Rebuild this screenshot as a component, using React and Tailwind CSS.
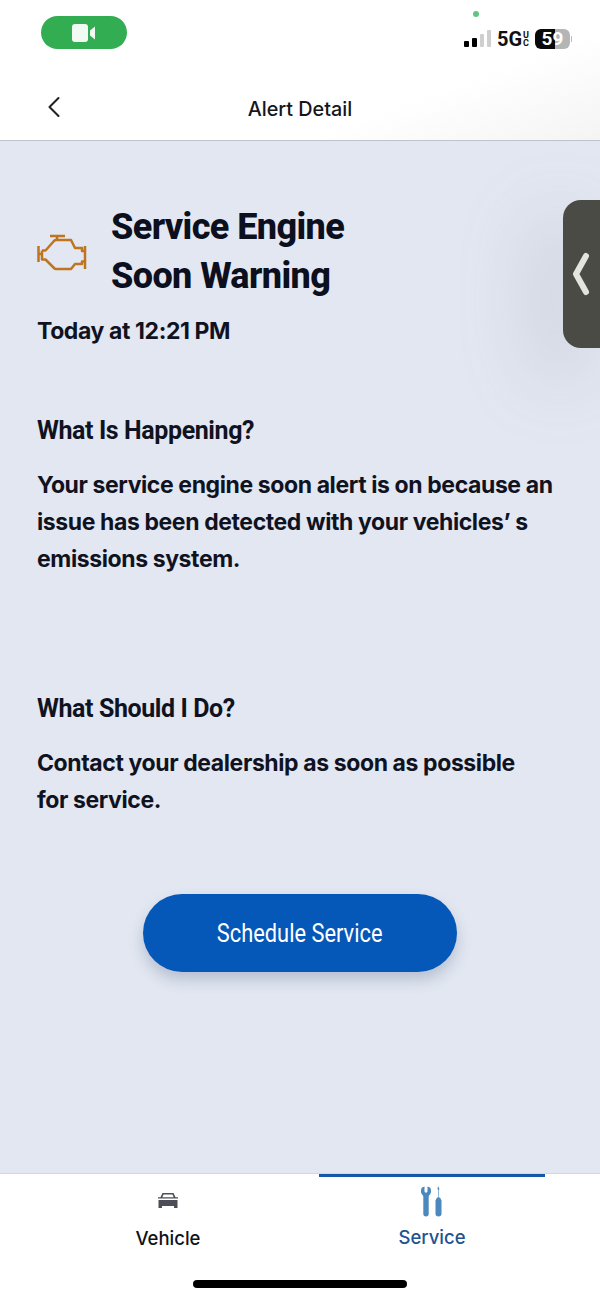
import { ChevronLeft } from "lucide-react";

function EngineIcon() {
  return (
    <svg width="50" height="37" viewBox="0 0 50 37" fill="none" stroke="#bf7420" strokeWidth="2.5" strokeLinejoin="round">
      <path d="M13 2h15M20 2v4" />
      <path d="M1.500 12v16M1.500 20h3.500M5 16.500v9h3.500L17 34q1 1 2 1h15l4-5h7v-2.500h3" />
      <path d="M5 16.500h3.500L17 7q1-1 2-1h15l4 8h7v3h3M48 12v23" />
    </svg>
  );
}

function CarIcon() {
  return (
    <svg width="22" height="18" viewBox="0 0 22 18" fill="#4b4f55">
      <path d="M5.500 1h11l2 4.200h2.500v1.300h-20V5.200H3.500zM6.600 2.500l-1.300 2.700h11.400l-1.300-2.700z" fillRule="evenodd" />
      <path d="M1.500 8h19v8h-3.500v-2h-12v2H1.500z" />
    </svg>
  );
}

function ToolsIcon() {
  return (
    <svg width="22" height="31" viewBox="0 0 22 31" fill="#4a88bd">
      <path d="M1 1.500l2.500-1v5l1.500 1.500 1.500-1.500v-5l2.500 1c1.500 2 1.500 5.500-.5 7.500-.5.500-.8.800-.8 1.500v17.500c0 1.500-1 2.500-2.700 2.500s-2.700-1-2.700-2.500V10.500c0-.7-.3-1-.8-1.500C-.5 7 -.5 3.500 1 1.500z" />
      <path d="M17 0l1.500 3-.7 1v7.500h1.200l1.500 3v13.500c0 1.500-1.200 2.500-3 2.500s-3-1-3-2.500V14.500l1.500-3h1.200V4l-.7-1z" />
    </svg>
  );
}

function StatusBar() {
  return (
    <div className="relative flex h-[65px] items-center justify-between pl-[41px] pr-[28px]">
      <div className="flex h-[33px] w-[86px] items-center justify-center rounded-full bg-[#32ad52]">
        <svg width="25" height="18" viewBox="0 0 25 18" fill="#f2fbf3">
          <rect x="0" y="0" width="16" height="18" rx="3" />
          <path d="M18 6.500l5-4v13l-5-4z" />
        </svg>
      </div>
      <span className="absolute left-[473px] top-[11px] h-[6px] w-[6px] rounded-full bg-[#62c383]" />
      <div className="flex items-center pt-[12px]">
        <div className="flex items-end gap-[3px]">
          <span className="h-[6px] w-[5px] rounded-[1px] bg-black" />
          <span className="h-[9px] w-[5px] rounded-[1px] bg-black" />
          <span className="h-[13px] w-[4px] rounded-[1px] bg-[#cfcfcf]" />
          <span className="h-[17px] w-[4px] rounded-[1px] bg-[#cfcfcf]" />
        </div>
        <span className="ml-[6px] font-['Roboto',sans-serif] text-[20px] font-bold leading-none text-[#111]">5G</span>
        <span className="ml-[1px] flex flex-col font-['Roboto',sans-serif] text-[9px] font-bold leading-[8px] text-[#111]">
          <span>U</span>
          <span>C</span>
        </span>
        <div className="ml-[6px] flex h-[20px] w-[35px] items-center justify-center rounded-[6px] bg-[linear-gradient(90deg,#0a0a0a_57%,#b5b5b5_57%)] font-['Roboto',sans-serif] text-[19px] font-bold leading-none text-white">
          59
        </div>
        <span className="ml-[1px] h-[6px] w-[1px] bg-[#bbb]" />
      </div>
    </div>
  );
}

function Header() {
  return (
    <header className="h-[141px] shrink-0 border-b border-[#bfc3cb] bg-[linear-gradient(160deg,#ffffff_70%,#f4f4f5_100%)]">
      <StatusBar />
      <div className="relative flex h-[75px] items-start justify-center pt-[31px]">
        <ChevronLeft className="absolute left-[36px] top-[24px] text-[#222]" size={36} strokeWidth={1.4} />
        <span className="text-[19.800px] font-medium leading-[26px] text-[#14161c]">Alert Detail</span>
      </div>
    </header>
  );
}

function SideHandle() {
  return (
    <div className="absolute right-0 top-[59px] flex h-[148px] w-[37px] items-center rounded-l-[18px] bg-[#4a4b45] pl-[9px] shadow-[-24px_24px_70px_6px_rgba(150,155,170,0.28)]">
      <svg width="18" height="44" viewBox="0 0 18 44" fill="none" stroke="#e4e4de" strokeWidth="6" strokeLinecap="round" strokeLinejoin="round">
        <path d="M14 4L4 22l10 18" />
      </svg>
    </div>
  );
}

function Section({ title, lines, className }) {
  return (
    <section className={className}>
      <h2 className="font-['Roboto',sans-serif] text-[25px] font-bold leading-[30px] tracking-[-0.4px] text-[#10131f]">{title}</h2>
      <p className="mt-[21px] text-[23px] font-bold leading-[37px] tracking-[-0.4px] text-[#10131f]">
        {lines.map((line) => (
          <span key={line} className="block whitespace-nowrap">
            {line}
          </span>
        ))}
      </p>
    </section>
  );
}

function TabBar() {
  return (
    <nav className="flex h-[127px] shrink-0 flex-col border-t border-[#d5d8de] bg-white">
      <div className="flex gap-[38px] px-[55px]">
        <div className="flex h-[77px] w-[226px] flex-col items-center pt-[17px]">
          <div className="flex h-[20px] items-center">
            <CarIcon />
          </div>
          <span className="mt-[15px] text-[18.500px] font-medium leading-[24px] text-[#101216]">Vehicle</span>
        </div>
        <div className="flex h-[77px] w-[226px] flex-col items-center border-t-[3px] border-[#1557a8] pt-[9px]">
          <ToolsIcon />
          <span className="mt-[8px] text-[18.500px] font-medium leading-[24px] text-[#1e5390]">Service</span>
        </div>
      </div>
      <div className="mt-[29px] flex justify-center">
        <span className="h-[8px] w-[214px] rounded-full bg-black" />
      </div>
    </nav>
  );
}

export default function App() {
  return (
    <div className="flex h-[1300px] w-[600px] flex-col overflow-hidden bg-white font-['Inter',sans-serif]">
      <Header />
      <main className="relative flex-1 overflow-hidden bg-[#e2e7f1] pl-[37px]">
        <SideHandle />
        <div className="flex items-center gap-[24px] pt-[62px]">
          <EngineIcon />
          <h1 className="font-['Roboto',sans-serif] text-[36px] font-extrabold leading-[49px] tracking-[-0.6px] text-[#0c0f1d]">
            Service Engine
            <br />
            Soon Warning
          </h1>
        </div>
        <p className="mt-[15px] text-[23px] font-bold leading-[30px] tracking-[-0.4px] text-[#10131f]">Today at 12:21 PM</p>
        <Section
          className="mt-[70px]"
          title="What Is Happening?"
          lines={["Your service engine soon alert is on because an", "issue has been detected with your vehicles’ s", "emissions system."]}
        />
        <Section
          className="mt-[116px]"
          title="What Should I Do?"
          lines={["Contact your dealership as soon as possible", "for service."]}
        />
        <div className="mt-[75px] flex justify-center pr-[37px]">
          <button className="h-[78px] w-[314px] rounded-full bg-[#0557b8] font-['Roboto',sans-serif] text-[26px] font-normal text-white shadow-[0_8px_14px_rgba(90,105,140,0.3)]">
            <span className="inline-block scale-x-[0.84] whitespace-nowrap">Schedule Service</span>
          </button>
        </div>
      </main>
      <TabBar />
    </div>
  );
}
